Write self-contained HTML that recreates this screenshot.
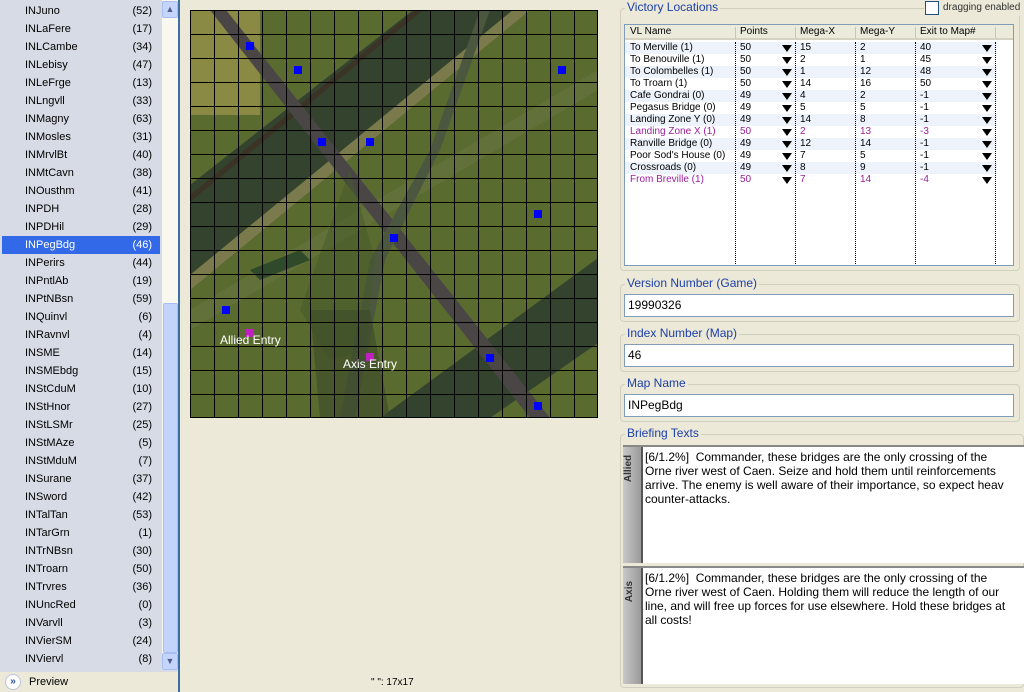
<!DOCTYPE html>
<html><head><meta charset="utf-8"><style>
*{margin:0;padding:0;box-sizing:border-box}
body{width:1024px;height:692px;background:#ece9d8;font-family:"Liberation Sans",sans-serif;font-size:11px;position:relative;overflow:hidden;color:#000}
.abs{position:absolute}
#list{left:0;top:0;width:180px;height:672px;background:#d6dbe6;border-right:2px solid #3a6ea5}
.it{position:absolute;left:2px;width:158px;height:18px;line-height:18px}
.it span.n{position:absolute;left:23px}
.it span.c{position:absolute;right:8px}
.sel{background:#3169e8;color:#fff}
.grp{position:absolute;border:1px solid #d0d0bf;border-radius:4px}
.lbl{position:absolute;color:#1c3fa8;font-size:12px;background:#ece9d8;padding:0 2px}
.inp{position:absolute;background:#fff;border:1px solid #7f9db9;font-size:12px;padding-left:3px;line-height:21px}
.tr{position:absolute;left:0;width:372px;height:12px;line-height:12px}
.tr span{position:absolute}
.pu{color:#9b1f9b}
.tri{position:absolute;width:0;height:0;border-left:5px solid transparent;border-right:5px solid transparent;border-top:7px solid #000}
.dot{position:absolute;top:0;height:240px;border-left:1px dotted #000}
.txt{position:absolute;background:#fff;font-size:12px;line-height:14px;padding:3px 0 0 2px;overflow:hidden;white-space:nowrap}
.tab{position:absolute;width:20px;background:linear-gradient(90deg,#c8c8c8,#9a9a9a);border-right:2px solid #555}
.tab span{position:absolute;transform:rotate(-90deg);font-size:10px;font-weight:bold;color:#333;white-space:nowrap}
</style></head><body>
<div id="list" class="abs">
<div class="it" style="top:2px"><span class="n">INJuno</span><span class="c">(52)</span></div>
<div class="it" style="top:20px"><span class="n">INLaFere</span><span class="c">(17)</span></div>
<div class="it" style="top:38px"><span class="n">INLCambe</span><span class="c">(34)</span></div>
<div class="it" style="top:56px"><span class="n">INLebisy</span><span class="c">(47)</span></div>
<div class="it" style="top:74px"><span class="n">INLeFrge</span><span class="c">(13)</span></div>
<div class="it" style="top:92px"><span class="n">INLngvll</span><span class="c">(33)</span></div>
<div class="it" style="top:110px"><span class="n">INMagny</span><span class="c">(63)</span></div>
<div class="it" style="top:128px"><span class="n">INMosles</span><span class="c">(31)</span></div>
<div class="it" style="top:146px"><span class="n">INMrvlBt</span><span class="c">(40)</span></div>
<div class="it" style="top:164px"><span class="n">INMtCavn</span><span class="c">(38)</span></div>
<div class="it" style="top:182px"><span class="n">INOusthm</span><span class="c">(41)</span></div>
<div class="it" style="top:200px"><span class="n">INPDH</span><span class="c">(28)</span></div>
<div class="it" style="top:218px"><span class="n">INPDHil</span><span class="c">(29)</span></div>
<div class="it sel" style="top:236px"><span class="n">INPegBdg</span><span class="c">(46)</span></div>
<div class="it" style="top:254px"><span class="n">INPerirs</span><span class="c">(44)</span></div>
<div class="it" style="top:272px"><span class="n">INPntlAb</span><span class="c">(19)</span></div>
<div class="it" style="top:290px"><span class="n">INPtNBsn</span><span class="c">(59)</span></div>
<div class="it" style="top:308px"><span class="n">INQuinvl</span><span class="c">(6)</span></div>
<div class="it" style="top:326px"><span class="n">INRavnvl</span><span class="c">(4)</span></div>
<div class="it" style="top:344px"><span class="n">INSME</span><span class="c">(14)</span></div>
<div class="it" style="top:362px"><span class="n">INSMEbdg</span><span class="c">(15)</span></div>
<div class="it" style="top:380px"><span class="n">INStCduM</span><span class="c">(10)</span></div>
<div class="it" style="top:398px"><span class="n">INStHnor</span><span class="c">(27)</span></div>
<div class="it" style="top:416px"><span class="n">INStLSMr</span><span class="c">(25)</span></div>
<div class="it" style="top:434px"><span class="n">INStMAze</span><span class="c">(5)</span></div>
<div class="it" style="top:452px"><span class="n">INStMduM</span><span class="c">(7)</span></div>
<div class="it" style="top:470px"><span class="n">INSurane</span><span class="c">(37)</span></div>
<div class="it" style="top:488px"><span class="n">INSword</span><span class="c">(42)</span></div>
<div class="it" style="top:506px"><span class="n">INTalTan</span><span class="c">(53)</span></div>
<div class="it" style="top:524px"><span class="n">INTarGrn</span><span class="c">(1)</span></div>
<div class="it" style="top:542px"><span class="n">INTrNBsn</span><span class="c">(30)</span></div>
<div class="it" style="top:560px"><span class="n">INTroarn</span><span class="c">(50)</span></div>
<div class="it" style="top:578px"><span class="n">INTrvres</span><span class="c">(36)</span></div>
<div class="it" style="top:596px"><span class="n">INUncRed</span><span class="c">(0)</span></div>
<div class="it" style="top:614px"><span class="n">INVarvll</span><span class="c">(3)</span></div>
<div class="it" style="top:632px"><span class="n">INVierSM</span><span class="c">(24)</span></div>
<div class="it" style="top:650px"><span class="n">INViervl</span><span class="c">(8)</span></div>
<div class="abs" style="left:162px;top:0;width:16px;height:670px;background:#f8f7f0"></div>
<div class="abs" style="left:162px;top:1px;width:16px;height:17px;background:#c4d4fb;border:1px solid #a8bdf0;border-radius:2px;color:#4d6185;font-size:9px;text-align:center;line-height:15px">&#9650;</div>
<div class="abs" style="left:163px;top:303px;width:15px;height:350px;background:#c2d3fc;border:1px solid #a8bdf0;border-radius:2px"></div>
<div class="abs" style="left:162px;top:653px;width:16px;height:17px;background:#c4d4fb;border:1px solid #a8bdf0;border-radius:2px;color:#4d6185;font-size:9px;text-align:center;line-height:15px">&#9660;</div>
</div>
<div class="abs" style="left:0;top:672px;width:180px;height:20px;background:#ece9d8;border-right:2px solid #3a6ea5">
<div class="abs" style="left:5px;top:2px;width:16px;height:16px;border-radius:8px;background:#fff;border:1px solid #b8c4dc;color:#2a4a9a;font-size:10px;text-align:center;line-height:14px;font-weight:bold">&#187;</div>
<div class="abs" style="left:29px;top:4px">Preview</div></div>
<div class="abs" style="left:371px;top:677px;font-size:10px">" ": 17x17</div>

<svg class="abs" style="left:190px;top:10px" width="408" height="408" viewBox="0 0 408 408">
<rect width="408" height="408" fill="#5a6b30"/>
<polygon points="0,0 70,0 70,105 0,105" fill="#8b8a45"/>
<polygon points="0,175 223,0 323,0 0,265" fill="#34432e"/>
<polygon points="0,265 323,0 340,0 0,280" fill="#7b7a4c"/>
<polygon points="190,408 408,248 408,333 300,408" fill="#34432e"/>
<polygon points="0,185 225,0 233,0 0,192" fill="#3b3326"/>
<polygon points="0,300 408,60 408,80 0,320" fill="#677540" opacity=".6"/>
<polygon points="20,0 36,0 360,408 340,408" fill="#4a4646"/>
<polygon points="150,408 180,250 240,140 290,0 300,0 250,140 195,250 165,408" fill="#4c5740"/>
<polygon points="60,260 110,240 120,250 70,270" fill="#2e4a2a"/>
<polygon points="160,160 185,250 175,340 140,350 110,300" fill="#445a2a" opacity=".5"/>
<polygon points="120,300 180,300 200,408 130,408" fill="#3c4a28" opacity=".6"/>
<g stroke="#000" stroke-width="1">
<path d="M0.5 0V408M24.5 0V408M48.5 0V408M72.5 0V408M96.5 0V408M120.5 0V408M144.5 0V408M168.5 0V408M192.5 0V408M216.5 0V408M240.5 0V408M264.5 0V408M288.5 0V408M312.5 0V408M336.5 0V408M360.5 0V408M384.5 0V408M407.5 0V408"/>
<path d="M0 0.5H408M0 24.5H408M0 48.5H408M0 72.5H408M0 96.5H408M0 120.5H408M0 144.5H408M0 168.5H408M0 192.5H408M0 216.5H408M0 240.5H408M0 264.5H408M0 288.5H408M0 312.5H408M0 336.5H408M0 360.5H408M0 384.5H408M0 407.5H408"/>
</g>
<g fill="#0000ff">
<rect x="56" y="32" width="8" height="8"/><rect x="104" y="56" width="8" height="8"/><rect x="368" y="56" width="8" height="8"/>
<rect x="128" y="128" width="8" height="8"/><rect x="176" y="128" width="8" height="8"/><rect x="344" y="200" width="8" height="8"/>
<rect x="200" y="224" width="8" height="8"/><rect x="32" y="296" width="8" height="8"/><rect x="296" y="344" width="8" height="8"/>
<rect x="344" y="392" width="8" height="8"/>
</g>
<g fill="#c020c0"><rect x="56" y="319" width="8" height="8"/><rect x="176" y="343" width="8" height="8"/></g>
<g fill="#fff" font-family="Liberation Sans,sans-serif" font-size="12">
<text x="30" y="334">Allied Entry</text><text x="153" y="358">Axis Entry</text></g>
</svg>

<div class="grp" style="left:620px;top:8px;width:400px;height:263px"></div>
<div class="lbl" style="left:625px;top:0px">Victory Locations</div>
<div class="abs" style="left:924px;top:0;width:100px;height:16px;background:#ece9d8;white-space:nowrap"><div class="abs" style="left:1px;top:1px;width:14px;height:14px;background:#fff;border:1px solid #1c5180"></div><span class="abs" style="left:19px;top:2px;font-size:10px;color:#333">dragging enabled</span></div>
<div class="abs" style="left:624px;top:24px;width:390px;height:242px;background:#fff;border:1px solid #7f9db9;overflow:hidden">
<div class="abs" style="left:0;top:0;width:390px;height:15px;background:#ebeadb;border-bottom:2px solid #d6d2c2;font-size:10px;line-height:14px">
<span class="abs" style="left:5px">VL Name</span><span class="abs" style="left:115px">Points</span><span class="abs" style="left:175px">Mega-X</span><span class="abs" style="left:235px">Mega-Y</span><span class="abs" style="left:295px">Exit to Map#</span>
<span class="abs" style="left:110px;top:2px;height:11px;border-left:1px solid #c7c5b2"></span><span class="abs" style="left:170px;top:2px;height:11px;border-left:1px solid #c7c5b2"></span><span class="abs" style="left:230px;top:2px;height:11px;border-left:1px solid #c7c5b2"></span><span class="abs" style="left:290px;top:2px;height:11px;border-left:1px solid #c7c5b2"></span><span class="abs" style="left:370px;top:2px;height:11px;border-left:1px solid #c7c5b2"></span></div>
<div class="abs" style="left:0;top:17px;width:390px;height:225px;font-size:10px">
<div class="tr" style="top:0;background:#eef3fb"><span style="left:5px">To Merville (1)</span><span style="left:115px">50</span><span style="left:175px">15</span><span style="left:235px">2</span><span style="left:295px">40</span></div>
<div class="tr" style="top:12px"><span style="left:5px">To Benouville (1)</span><span style="left:115px">50</span><span style="left:175px">2</span><span style="left:235px">1</span><span style="left:295px">45</span></div>
<div class="tr" style="top:24px;background:#eef3fb"><span style="left:5px">To Colombelles (1)</span><span style="left:115px">50</span><span style="left:175px">1</span><span style="left:235px">12</span><span style="left:295px">48</span></div>
<div class="tr" style="top:36px"><span style="left:5px">To Troarn (1)</span><span style="left:115px">50</span><span style="left:175px">14</span><span style="left:235px">16</span><span style="left:295px">50</span></div>
<div class="tr" style="top:48px;background:#eef3fb"><span style="left:5px">Cafe Gondrai (0)</span><span style="left:115px">49</span><span style="left:175px">4</span><span style="left:235px">2</span><span style="left:295px">-1</span></div>
<div class="tr" style="top:60px"><span style="left:5px">Pegasus Bridge (0)</span><span style="left:115px">49</span><span style="left:175px">5</span><span style="left:235px">5</span><span style="left:295px">-1</span></div>
<div class="tr" style="top:72px;background:#eef3fb"><span style="left:5px">Landing Zone Y (0)</span><span style="left:115px">49</span><span style="left:175px">14</span><span style="left:235px">8</span><span style="left:295px">-1</span></div>
<div class="tr pu" style="top:84px"><span style="left:5px">Landing Zone X (1)</span><span style="left:115px">50</span><span style="left:175px">2</span><span style="left:235px">13</span><span style="left:295px">-3</span></div>
<div class="tr" style="top:96px;background:#eef3fb"><span style="left:5px">Ranville Bridge (0)</span><span style="left:115px">49</span><span style="left:175px">12</span><span style="left:235px">14</span><span style="left:295px">-1</span></div>
<div class="tr" style="top:108px"><span style="left:5px">Poor Sod's House (0)</span><span style="left:115px">49</span><span style="left:175px">7</span><span style="left:235px">5</span><span style="left:295px">-1</span></div>
<div class="tr" style="top:120px;background:#eef3fb"><span style="left:5px">Crossroads (0)</span><span style="left:115px">49</span><span style="left:175px">8</span><span style="left:235px">9</span><span style="left:295px">-1</span></div>
<div class="tr pu" style="top:132px"><span style="left:5px">From Breville (1)</span><span style="left:115px">50</span><span style="left:175px">7</span><span style="left:235px">14</span><span style="left:295px">-4</span></div>
<div class="dot" style="left:110px"></div><div class="dot" style="left:170px"></div><div class="dot" style="left:230px"></div><div class="dot" style="left:290px"></div><div class="dot" style="left:370px"></div>
<div class="tri" style="left:157px;top:3px"></div><div class="tri" style="left:357px;top:3px"></div>
<div class="tri" style="left:157px;top:15px"></div><div class="tri" style="left:357px;top:15px"></div>
<div class="tri" style="left:157px;top:27px"></div><div class="tri" style="left:357px;top:27px"></div>
<div class="tri" style="left:157px;top:39px"></div><div class="tri" style="left:357px;top:39px"></div>
<div class="tri" style="left:157px;top:51px"></div><div class="tri" style="left:357px;top:51px"></div>
<div class="tri" style="left:157px;top:63px"></div><div class="tri" style="left:357px;top:63px"></div>
<div class="tri" style="left:157px;top:75px"></div><div class="tri" style="left:357px;top:75px"></div>
<div class="tri" style="left:157px;top:87px"></div><div class="tri" style="left:357px;top:87px"></div>
<div class="tri" style="left:157px;top:99px"></div><div class="tri" style="left:357px;top:99px"></div>
<div class="tri" style="left:157px;top:111px"></div><div class="tri" style="left:357px;top:111px"></div>
<div class="tri" style="left:157px;top:123px"></div><div class="tri" style="left:357px;top:123px"></div>
<div class="tri" style="left:157px;top:135px"></div><div class="tri" style="left:357px;top:135px"></div>
</div></div>

<div class="grp" style="left:620px;top:284px;width:400px;height:38px"></div>
<div class="lbl" style="left:625px;top:276px">Version Number (Game)</div>
<div class="inp" style="left:624px;top:294px;width:390px;height:23px">19990326</div>
<div class="grp" style="left:620px;top:334px;width:400px;height:38px"></div>
<div class="lbl" style="left:625px;top:326px">Index Number (Map)</div>
<div class="inp" style="left:624px;top:344px;width:390px;height:23px">46</div>
<div class="grp" style="left:620px;top:384px;width:400px;height:38px"></div>
<div class="lbl" style="left:625px;top:376px">Map Name</div>
<div class="inp" style="left:624px;top:394px;width:390px;height:23px">INPegBdg</div>
<div class="grp" style="left:620px;top:434px;width:404px;height:254px"></div>
<div class="lbl" style="left:625px;top:426px">Briefing Texts</div>
<div class="abs" style="left:623px;top:445px;width:401px;height:2px;background:#888"></div>
<div class="tab" style="left:623px;top:447px;height:116px"><span style="left:-8px;top:16px">Allied</span></div>
<div class="txt" style="left:643px;top:447px;width:381px;height:116px">[6/1.2%]&nbsp; Commander, these bridges are the only crossing of the<br>Orne river west of Caen. Seize and hold them until reinforcements<br>arrive. The enemy is well aware of their importance, so expect heav<br>counter-attacks.</div>
<div class="abs" style="left:623px;top:566px;width:401px;height:2px;background:#888"></div>
<div class="tab" style="left:623px;top:568px;height:116px"><span style="left:-4px;top:18px">Axis</span></div>
<div class="txt" style="left:643px;top:568px;width:381px;height:116px">[6/1.2%]&nbsp; Commander, these bridges are the only crossing of the<br>Orne river west of Caen. Holding them will reduce the length of our<br>line, and will free up forces for use elsewhere. Hold these bridges at<br>all costs!</div>
</body></html>
